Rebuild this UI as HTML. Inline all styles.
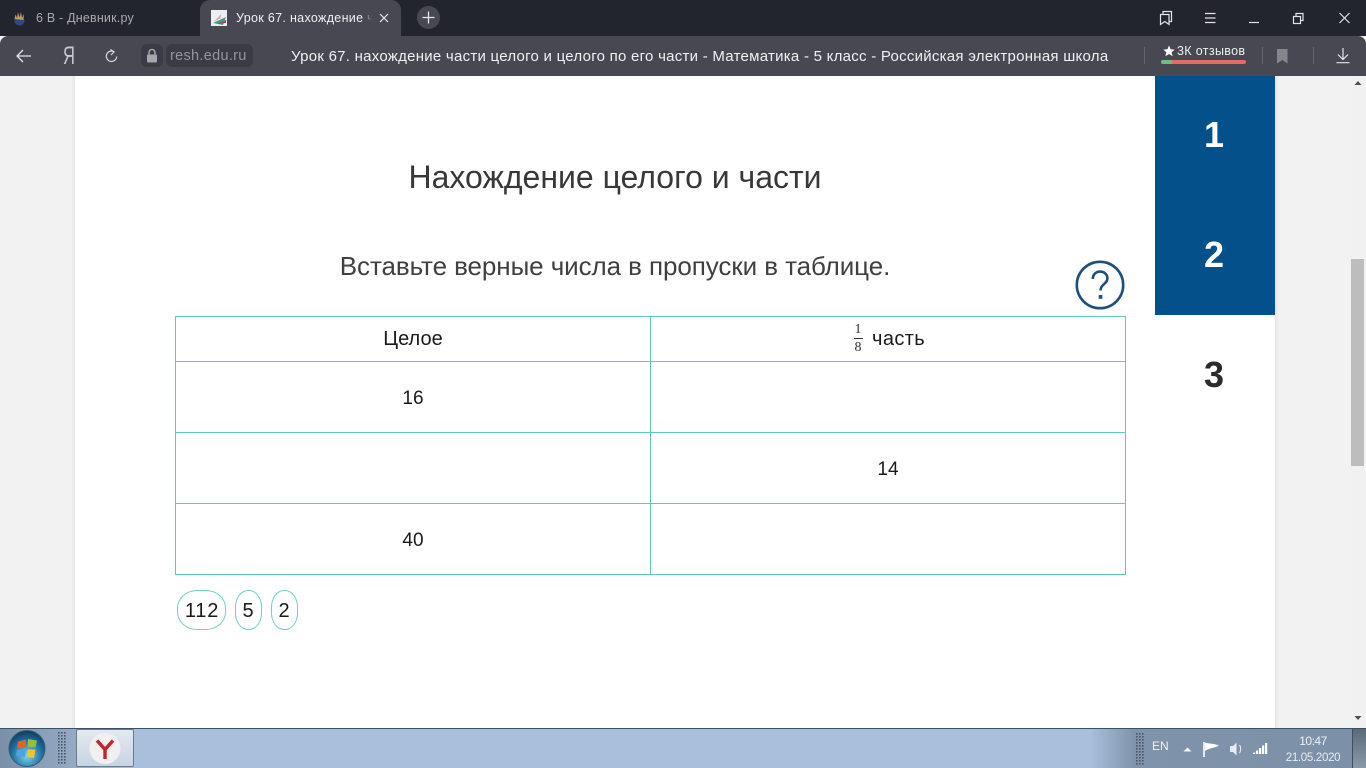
<!DOCTYPE html>
<html lang="ru"><head><meta charset="utf-8"><title>Урок 67</title>
<style>
html,body{margin:0;padding:0;width:1366px;height:768px;overflow:hidden;background:#f2f2f2;font-family:"Liberation Sans","Noto Sans CJK SC",sans-serif;}
.a{position:absolute;white-space:nowrap;}
svg{position:absolute;overflow:visible;}
.c{position:absolute;background:#fff;}
.tl{position:absolute;background:#5fc9c0;}
.t{color:#1a1a1a;font-size:19px;text-align:center;}
.chip{position:absolute;top:590px;height:38px;border:1px solid #6fcfc8;border-radius:20px/18px;font-size:20px;line-height:40px;text-align:center;color:#1a1a1a;background:#fff;letter-spacing:.8px;}
</style></head><body>

<!-- page -->
<div class="c" style="left:75px;top:76px;width:1200px;height:652px;"></div>
<div class="a" style="left:71px;top:76px;width:4px;height:652px;background:linear-gradient(90deg,#f2f2f2,#e6e6e6);"></div>
<div class="a" style="left:1275px;top:76px;width:4px;height:652px;background:linear-gradient(90deg,#e4e4e4,#f2f2f2);"></div>

<!-- side nav -->
<div class="a" style="left:1155px;top:76px;width:120px;height:239px;background:#03508a;"></div>
<div class="a" style="left:1155px;top:113px;width:118px;text-align:center;font-weight:bold;font-size:36px;line-height:44px;color:#fff;">1</div>
<div class="a" style="left:1155px;top:233px;width:118px;text-align:center;font-weight:bold;font-size:36px;line-height:44px;color:#fff;">2</div>
<div class="a" style="left:1155px;top:353px;width:118px;text-align:center;font-weight:bold;font-size:36px;line-height:44px;color:#2b2b2b;">3</div>

<!-- headings -->
<div class="a" style="left:175px;width:880px;top:157px;text-align:center;font-size:32px;line-height:40px;color:#383838;">Нахождение целого и части</div>
<div class="a" style="left:175px;width:880px;top:250px;text-align:center;font-size:26px;line-height:32px;color:#404040;letter-spacing:-.08px;">Вставьте верные числа в пропуски в таблице.</div>

<!-- help -->
<svg style="left:1075px;top:260px" width="50" height="50" viewBox="0 0 50 50">
<circle cx="25" cy="25" r="23.2" fill="#fff" stroke="#1d4f7c" stroke-width="2.6"/>
<path d="M17.800 19c0-4.500 3.200-7.400 7.300-7.400 4.200 0 7.300 3 7.300 6.600 0 5.800-6.900 6-6.900 12.300" fill="none" stroke="#1d4f7c" stroke-width="2.600"/>
<rect x="23.700" y="35" width="3.600" height="3.800" fill="#1d4f7c"/>
</svg>

<!-- table -->
<div class="tl" style="left:175px;top:316px;width:951px;height:1px;"></div>
<div class="tl" style="left:175px;top:361px;width:951px;height:1px;"></div>
<div class="tl" style="left:175px;top:432px;width:951px;height:1px;"></div>
<div class="tl" style="left:175px;top:503px;width:951px;height:1px;"></div>
<div class="tl" style="left:175px;top:574px;width:951px;height:1px;"></div>
<div class="tl" style="left:175px;top:316px;width:1px;height:259px;"></div>
<div class="tl" style="left:650px;top:316px;width:1px;height:259px;"></div>
<div class="tl" style="left:1125px;top:316px;width:1px;height:259px;"></div>

<div class="a t" style="left:176px;width:474px;top:328px;line-height:22px;font-size:20px;">Целое</div>
<div class="a t" style="left:872px;top:328px;line-height:22px;font-size:20px;letter-spacing:.4px;">часть</div>
<div class="a" style="left:848px;width:20px;top:322px;text-align:center;font-family:'Liberation Serif',serif;font-size:14px;line-height:16px;color:#333;">1</div>
<div class="a" style="left:853.500px;top:338px;width:9px;height:1px;background:#333;"></div>
<div class="a" style="left:848px;width:20px;top:340px;text-align:center;font-family:'Liberation Serif',serif;font-size:14px;line-height:16px;color:#333;">8</div>
<div class="a t" style="left:176px;width:474px;top:388px;line-height:22px;">16</div>
<div class="a t" style="left:651px;width:474px;top:459px;line-height:22px;">14</div>
<div class="a t" style="left:176px;width:474px;top:530px;line-height:22px;">40</div>

<!-- chips -->
<div class="chip" style="left:177px;width:47px;text-indent:1px;">112</div>
<div class="chip" style="left:235px;width:25px;border-radius:13px/17px;">5</div>
<div class="chip" style="left:271px;width:25px;border-radius:13px/17px;">2</div>

<!-- scrollbar -->
<div class="a" style="left:1350px;top:76px;width:16px;height:652px;background:#f1f1f1;"></div>
<div class="a" style="left:1351px;top:259px;width:13px;height:207px;background:#bdbdbd;"></div>
<svg style="left:1350px;top:76px" width="16" height="652"><path d="M4.500 9 8 5 11.500 9z" fill="#505050"/><path d="M4.500 640 8 644 11.500 640z" fill="#505050"/></svg>

<!-- browser chrome -->
<div class="a" style="left:0;top:0;width:1366px;height:36px;background:#23252e;"></div>
<div class="a" style="left:0;top:36px;width:1366px;height:40px;background:#474852;border-radius:8px 8px 0 0;"></div>
<div class="a" style="left:200px;top:0;width:201px;height:37px;background:#474852;border-radius:10px 10px 0 0;"></div>

<!-- tab 1 -->
<svg style="left:12px;top:10px" width="16" height="16" viewBox="0 0 16 16">
<ellipse cx="7.500" cy="11" rx="5" ry="4.500" fill="#2b4a86"/>
<path d="M2.500 9 3.500 4.500 5 8 6 2 7.500 7.500 9 2 10 8 12 4 11.500 10z" fill="#c29a5e"/>
</svg>
<div class="a" style="left:36px;top:10px;font-size:12.500px;line-height:16px;color:#a8a9ad;letter-spacing:.2px;">6 В - Дневник.ру</div>

<!-- tab 2 -->
<svg style="left:211px;top:10px" width="16" height="16" viewBox="0 0 16 16">
<rect width="16" height="16" fill="#eee"/>
<path d="M3 12 10 4 9.500 8z" fill="#d9a3b5"/><path d="M2 13 15 7 12 15z" fill="#3aa18f"/><path d="M6 14 15 10 15 13z" fill="#c23a5a"/>
</svg>
<div class="a" style="left:236px;top:10px;width:136px;overflow:hidden;font-size:12.500px;line-height:16px;color:#f0f0f2;letter-spacing:.32px;">Урок 67. нахождение части</div>
<div class="a" style="left:362px;top:8px;width:11px;height:22px;background:linear-gradient(90deg,rgba(71,72,82,.1),#474852);"></div>
<svg style="left:378px;top:12px" width="12" height="12"><path d="M2 2 10 10M10 2 2 10" stroke="#e6e6e8" stroke-width="1.200" fill="none"/></svg>

<!-- new tab -->
<div class="a" style="left:417px;top:6px;width:23px;height:23px;border-radius:50%;background:#474852;"></div>
<svg style="left:417px;top:6px" width="23" height="23"><path d="M11.500 5.500v12M5.500 11.500h12" stroke="#e6e6e8" stroke-width="1.300"/></svg>

<!-- window controls -->
<svg style="left:1150px;top:0" width="210" height="36" fill="none" stroke="#e2e2e5" stroke-width="1.200">
<path d="M10.500 14.500h8.500v10l-4.200-3-4.300 3z"/><path d="M13 14.500v-3h8.500v10h-2.500"/>
<path d="M55 13.500h10.500M55 18h10.500M55 22.500h10.500"/>
<path d="M99 22.500h10"/>
<rect x="143.500" y="16.500" width="7" height="7"/><path d="M146 16.500v-3h7v7h-2.500"/>
<path d="M189.500 13 199.500 23M199.500 13 189.500 23"/>
</svg>

<!-- nav -->
<svg style="left:16px;top:48px" width="16" height="16" fill="none" stroke="#e6e6e8" stroke-width="1.300"><path d="M1 8h14M7 2 1 8l6 6"/></svg>
<div class="a" style="left:59px;top:44px;width:20px;text-align:center;font-size:25px;line-height:24px;color:#c9cace;transform:scaleX(.66);">Я</div>
<svg style="left:104px;top:48px" width="15" height="16" fill="none" stroke="#d8d8db" stroke-width="1.200"><path d="M10.500 4A5.200 5.200 0 1 0 12.700 8.500"/><path d="M6.500 1.500 10 4 7 7"/></svg>
<div class="a" style="left:141px;top:44px;width:22px;height:23px;border-radius:6px;background:#3a3b44;"></div>
<div class="a" style="left:166px;top:44px;width:87px;height:23px;border-radius:6px;background:#3a3b44;"></div>
<svg style="left:146px;top:48px" width="12" height="15"><path d="M3 6.500V4.500a3 3 0 0 1 6 0v2" fill="none" stroke="#a5a6aa" stroke-width="1.500"/><rect x="1" y="6.500" width="10" height="8" rx="1" fill="#a5a6aa"/></svg>
<div class="a" style="left:170px;top:46px;font-size:14.500px;line-height:20px;color:#94959b;letter-spacing:.3px;">resh.edu.ru</div>
<div class="a" style="left:291px;top:47px;font-size:15px;line-height:20px;color:#f0f0f2;letter-spacing:.26px;">Урок 67. нахождение части целого и целого по его части - Математика - 5 класс - Российская электронная школа</div>

<div class="a" style="left:1144px;top:47px;width:1px;height:17px;background:#63646d;"></div>
<div class="a" style="left:1262px;top:47px;width:1px;height:17px;background:#63646d;"></div>
<div class="a" style="left:1313px;top:47px;width:1px;height:17px;background:#63646d;"></div>
<svg style="left:1163px;top:45px" width="12" height="12"><path d="M6 .5 7.600 4.300 11.700 4.600 8.600 7.200 9.600 11.200 6 9 2.400 11.200 3.400 7.200 .3 4.600 4.400 4.300z" fill="#fff"/></svg>
<div class="a" style="left:1177px;top:43px;font-size:12.500px;line-height:16px;color:#eeeef0;letter-spacing:.35px;">3К отзывов</div>
<div class="a" style="left:1161px;top:60px;width:85px;height:4px;border-radius:2px;background:linear-gradient(90deg,#6fbf80 0,#6fbf80 11px,#e56a6a 11px);"></div>
<svg style="left:1277px;top:49px" width="11" height="15"><path d="M0 0h10.500v14.500L5.250 11 0 14.500z" fill="#85868c"/></svg>
<svg style="left:1335px;top:47px" width="16" height="17" fill="none" stroke="#e6e6e8" stroke-width="1.200"><path d="M8 1v11M3 7.500 8 12.500 13 7.500M1.500 15.700h13"/></svg>

<!-- taskbar -->
<div class="a" style="left:0;top:728px;width:1366px;height:40px;background:linear-gradient(90deg,#7a8fa8 0,#8ea3bc 55px,#a8c0dc 135px,#a8c0dc 1090px,#7f93aa 1135px,#7c90a8 1366px);border-top:1px solid #3e4f60;box-sizing:border-box;"></div>
<svg style="left:8px;top:730px" width="38" height="38" viewBox="0 0 38 38">
<defs><radialGradient id="o" cx=".5" cy=".7" r=".7"><stop offset="0" stop-color="#7fd6e8"/><stop offset=".6" stop-color="#1e6fa0"/><stop offset="1" stop-color="#0d3a5c"/></radialGradient></defs>
<circle cx="19" cy="18.500" r="18" fill="url(#o)" stroke="#3c5a70"/>
<path d="M10 11.500 18 9.500 17.500 17.500 9 18.500z" fill="#e2622a"/>
<path d="M20 9 29 10.500 27.500 17.500 19.500 17z" fill="#8fc23e"/>
<path d="M9 20 17.500 19.500 17 27 8 25.500z" fill="#4aa6e0"/>
<path d="M19.500 19.500 27.500 19.500 26 28 19 27z" fill="#f4c22e"/>
</svg>
<svg style="left:58px;top:732px" width="9" height="33"><defs><pattern id="dots" width="3" height="3" patternUnits="userSpaceOnUse"><rect width="1.600" height="1.600" fill="#4a5866"/></pattern></defs><rect width="9" height="33" fill="url(#dots)"/></svg>
<div class="a" style="left:76px;top:729px;width:58px;height:38px;border:1px solid #6a7a8a;box-sizing:border-box;border-radius:2px;background:linear-gradient(#e4e9f0,#c8d4e2);"></div>
<svg style="left:89px;top:733px" width="32" height="32" viewBox="0 0 32 32"><circle cx="16" cy="15.500" r="15.500" fill="#f0f0f0"/><path d="M8 7.500 16 16.500M24 7.500 16 16.500M16 16.500V26" fill="none" stroke="#c8212e" stroke-width="3.400"/></svg>
<svg style="left:1136px;top:733px" width="9" height="33"><rect width="9" height="33" fill="url(#dots)"/></svg>
<div class="a" style="left:1152px;top:738px;font-size:12px;line-height:16px;color:#eef2f6;">EN</div>
<svg style="left:1182px;top:738px" width="90" height="22">
<path d="M1.500 13.500 5.500 9.500 9.500 13.500z" fill="#f2f4f6"/>
<path d="M22 4v15" stroke="#fff" stroke-width="1.600"/><path d="M23 4.500c4 1.500 8 .5 14 3-3 2.500-9 2-14 5.500z" fill="#fff"/>
<path d="M48 8h3l3.500-3.500v13L51 14h-3z" fill="#e8ecf0"/><path d="M57.500 7c1.500 2 1.500 6 0 8" fill="none" stroke="#e8ecf0" stroke-width="1.100"/>
<path d="M71 16h2.200v-1.500H71zM74 16h2.200v-3.500H74zM77 16h2.200V10H77zM80 16h2.200V7.500H80zM83 16h2.200V5H83z" fill="#fff"/>
</svg>
<div class="a" style="left:1278px;top:733px;width:70px;text-align:center;font-size:12px;line-height:16px;color:#eef2f6;letter-spacing:-.5px;">10:47</div>
<div class="a" style="left:1278px;top:750px;width:70px;text-align:center;font-size:11.500px;line-height:16px;color:#e6ecf2;letter-spacing:-.3px;">21.05.2020</div>
<div class="a" style="left:1352px;top:729px;width:14px;height:39px;background:linear-gradient(#5a6a78,#8a9aa8);border-left:1px solid #3e4f60;box-sizing:border-box;"></div>
</body></html>
